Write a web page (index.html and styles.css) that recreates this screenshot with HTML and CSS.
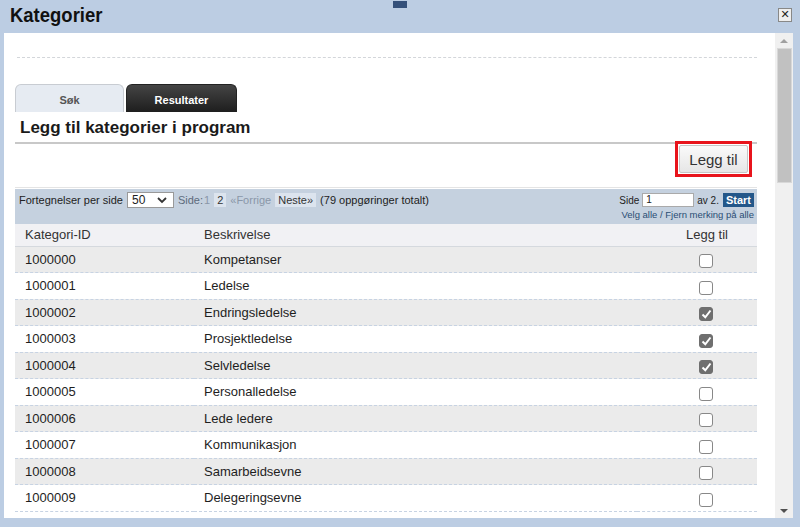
FILE: index.html
```html
<!DOCTYPE html>
<html lang="no">
<head>
    <meta charset="UTF-8">
    <title>Kategorier</title>
    <link rel="stylesheet" href="styles.css">
</head>
<body>
    <div class="dialog">
        <div class="grip"></div>
        <div class="titlebar">
            <h1>Kategorier</h1>
            <span class="close">✕</span>
        </div>
        <div class="window">
            <div class="content">
                <div class="dotted"></div>
                <div class="tabs">
                    <div class="tab">Søk</div>
                    <div class="tab active">Resultater</div>
                </div>
                <h2>Legg til kategorier i program</h2>
                <div class="actions">
                    <div class="highlight"><button class="btn-add">Legg til</button></div>
                </div>
                <div class="toolbar">
                    <div class="pager">
                        Fortegnelser per side
                        <span class="select">50 <svg width="10" height="7" viewBox="0 0 10 7"><path d="M1 1l4 4 4-4" fill="none" stroke="#333" stroke-width="1.8"/></svg></span>
                        <span class="dim">Side:</span> <span class="muted">1</span>
                        <span class="page">2</span>
                        <span class="muted">«Forrige</span>
                        <span class="page">Neste»</span>
                        (79 oppgøringer totalt)
                    </div>
                    <div class="goto">
                        <div class="goto-line">Side <span class="page-input">1</span> av 2. <span class="start">Start</span></div>
                        <div class="select-all">Velg alle / Fjern merking på alle</div>
                    </div>
                </div>
                <table class="results">
                    <colgroup><col class="c-id"><col><col class="c-add"></colgroup>
                    <thead>
                        <tr><th>Kategori-ID</th><th>Beskrivelse</th><th class="col-add">Legg til</th></tr>
                    </thead>
                    <tbody>
                        <tr><td>1000000</td><td>Kompetanser</td><td class="col-add"><span class="cb"></span></td></tr>
                        <tr><td>1000001</td><td>Ledelse</td><td class="col-add"><span class="cb"></span></td></tr>
                        <tr><td>1000002</td><td>Endringsledelse</td><td class="col-add"><span class="cb on"><svg width="11" height="10" viewBox="0 0 11 10"><path d="M1.5 5.5l2.8 2.8L9.5 1.5" fill="none" stroke="#fff" stroke-width="2"/></svg></span></td></tr>
                        <tr><td>1000003</td><td>Prosjektledelse</td><td class="col-add"><span class="cb on"><svg width="11" height="10" viewBox="0 0 11 10"><path d="M1.5 5.5l2.8 2.8L9.5 1.5" fill="none" stroke="#fff" stroke-width="2"/></svg></span></td></tr>
                        <tr><td>1000004</td><td>Selvledelse</td><td class="col-add"><span class="cb on"><svg width="11" height="10" viewBox="0 0 11 10"><path d="M1.5 5.5l2.8 2.8L9.5 1.5" fill="none" stroke="#fff" stroke-width="2"/></svg></span></td></tr>
                        <tr><td>1000005</td><td>Personalledelse</td><td class="col-add"><span class="cb"></span></td></tr>
                        <tr><td>1000006</td><td>Lede ledere</td><td class="col-add"><span class="cb"></span></td></tr>
                        <tr><td>1000007</td><td>Kommunikasjon</td><td class="col-add"><span class="cb"></span></td></tr>
                        <tr><td>1000008</td><td>Samarbeidsevne</td><td class="col-add"><span class="cb"></span></td></tr>
                        <tr><td>1000009</td><td>Delegeringsevne</td><td class="col-add"><span class="cb"></span></td></tr>
                    </tbody>
                </table>
            </div>
            <div class="scrollbar">
                <span class="arrow up"></span>
                <div class="thumb"></div>
                <div class="track"></div>
                <span class="arrow down"></span>
            </div>
        </div>
    </div>
</body>
</html>
```

FILE: styles.css
```css
* { margin: 0; padding: 0; box-sizing: border-box; }
body {
    font-family: "Liberation Sans", Arial, sans-serif;
    background: #bccde3;
    width: 800px; height: 527px; overflow: hidden;
}
.dialog { position: relative; height: 527px; }
.grip {
    position: absolute; left: 393px; top: 1px;
    width: 14px; height: 7px; background: #34507a;
}
.titlebar {
    height: 33px; display: flex; align-items: center;
    justify-content: space-between; padding: 0 10px 4px 10px;
}
.titlebar h1 {
    font-family: "Liberation Sans Narrow", "Liberation Sans", sans-serif;
    font-size: 21px; font-weight: bold; color: #111;
    transform: scaleX(0.88); transform-origin: left center;
}
.close {
    width: 14px; height: 14px; border: 1px solid #888; background: #eee;
    font-size: 11px; line-height: 12px; text-align: center; color: #222;
    font-family: "DejaVu Sans", sans-serif; font-weight: bold; margin-right: -2px;
}
.window { display: flex; height: 485px; padding-left: 4px; padding-right: 7px; }
.content {
    flex: 1; background: white; overflow: hidden;
    padding: 24px 18px 0 11px;
}
.dotted { border-top: 1px dashed #d3d6da; margin: 0 0 26px 2px; }
.tabs { display: flex; gap: 2px; height: 28px; }
.tab {
    width: 109px; background: #e6ebf2; border: 1px solid #c8ccd2; border-bottom: none;
    border-radius: 6px 6px 0 0; text-align: center; font-size: 11px;
    font-weight: bold; color: #555; padding-top: 9px;
}
.tab.active {
    width: 111px; border-color: #222;
    background: linear-gradient(#444, #1e1e1e); color: white;
}
h2 {
    font-size: 17px; line-height: 20px; font-weight: bold; color: #1a1a1a;
    padding: 6px 0 4px 5px; border-bottom: 2px solid #c8c8c8;
}
.actions {
    display: flex; justify-content: flex-end; padding-right: 5px;
    border-bottom: 1px solid #e4e4e4; height: 44px;
}
.highlight {
    border: 3px solid #e8141c; height: 36px; width: 77px;
    padding: 1px; margin-top: -3px;
}
.btn-add {
    width: 69px; height: 28px; border: 1px solid #c6c6c6; border-radius: 2px;
    background: linear-gradient(#fafafa, #e6e6e6);
    font-family: "Liberation Sans", Arial, sans-serif; font-size: 15px; color: #333;
}
.toolbar {
    background: #c5d1df; margin-top: 1px; height: 35px;
    display: flex; justify-content: space-between; padding: 3px 3px 0 4px;
    font-size: 10px; color: #222;
}
.pager { display: flex; align-items: center; gap: 4px; height: 16px; font-size: 11px; }
.select {
    display: inline-flex; align-items: center; gap: 12px; background: white;
    border: 1px solid #999; height: 16px; padding: 0 4px; font-size: 12px;
    width: 47px; margin-left: 0;
}
.dim { color: #5d6b7c; margin-right: -3px; }
.muted { color: #8a97a8; }
.page { background: #dce4ee; padding: 1px 3px; color: #333; }
.goto { text-align: right; }
.goto-line { display: flex; align-items: center; justify-content: flex-end; gap: 3px; height: 16px; }
.page-input {
    width: 52px; height: 14px; background: white; border: 1px solid #aaa;
    text-align: left; padding-left: 3px; line-height: 12px;
}
.start {
    background: #23578a; color: white; font-weight: bold; font-size: 11px;
    padding: 1px 3px; margin-left: 1px;
}
.select-all { color: #2a4d74; margin-top: 1px; font-size: 9.5px; }
.results { width: 100%; border-collapse: collapse; font-size: 13px; color: #1e1e1e; table-layout: fixed; }
.results .c-id { width: 179px; }
.results .c-add { width: 120px; }
.results th {
    background: #f1f1f4; font-weight: normal; text-align: left; height: 22px;
    font-size: 13px; color: #333; padding-left: 10px; border-bottom: 1px solid #d5d9de;
    white-space: nowrap;
}
.results td { height: 26.5px; padding-left: 10px; border-bottom: 1px dashed #c7d3e3; vertical-align: middle; }
.results tbody tr:nth-child(odd) { background: #ebebeb; }
.results th.col-add { text-align: right; padding-right: 29px; }
.results td.col-add { text-align: right; padding-right: 44px; }
.cb {
    display: inline-flex; align-items: center; justify-content: center;
    width: 14px; height: 14px; border: 1px solid #888; border-radius: 3px;
    background: white; vertical-align: middle; margin-top: 4px;
}
.cb.on { background: #6f6f6f; border-color: #6f6f6f; }
.scrollbar {
    width: 18px; background: #f0f0f0; display: flex; flex-direction: column;
    align-items: center; padding: 6px 0 5px;
}
.arrow { width: 0; height: 0; border-left: 4px solid transparent; border-right: 4px solid transparent; }
.arrow.up { border-bottom: 4px solid #a0a0a0; margin-bottom: 5px; }
.arrow.down { border-top: 4px solid #505050; }
.thumb { width: 15px; height: 135px; background: #c1c1c1; border: 1px solid #d8d8d8; }
.track { flex: 1; }
```
